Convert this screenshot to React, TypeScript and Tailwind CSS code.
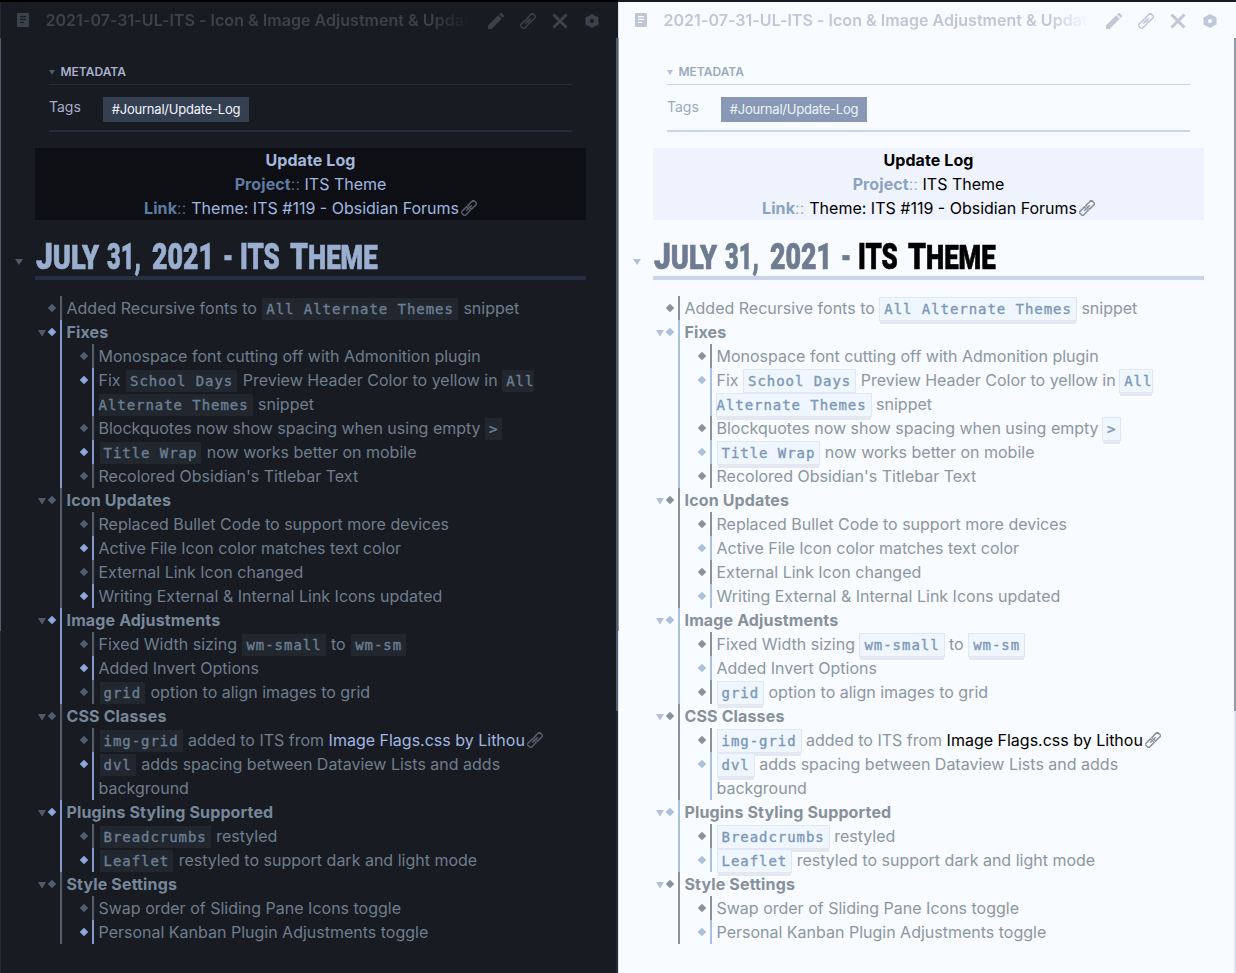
import React, { createContext, useContext } from "react";

type Theme = {
  dark: boolean;
  bg: string; title: string; meta: string; tri: string; rule: string; tag: string;
  card: string; cardTitle: string; key: string; value: string; linkIcon: string;
  h1a: string; h1b: string; h1rule: string;
  text: string; strong: string; code: string; link: string;
  edge: string; track: string;
};

const dark: Theme = {
  dark: true,
  bg: "bg-[#181b22]",
  title: "text-[#3a434b]",
  meta: "text-[#a7b0cb]",
  tri: "text-[#4f5b6b]",
  rule: "border-[#232c3f]",
  tag: "bg-[#353f52] text-[#f1f4fa]",
  card: "bg-[#0e0f14]",
  cardTitle: "text-[#a3b8dc]",
  key: "text-[#5d7ba3]",
  value: "text-[#a0b7e0]",
  linkIcon: "text-[#565e6c]",
  h1a: "text-[#9aaed0]",
  h1b: "text-[#9aaed0]",
  h1rule: "border-[#252f40]",
  text: "text-[#6f7d8c]",
  strong: "text-[#778799]",
  code: "bg-[#22272f] text-[#6c7f92]",
  link: "text-[#a0b7e0]",
  edge: "bg-[#4f5d6f]",
  track: "bg-[#232a37]",
};

const light: Theme = {
  dark: false,
  bg: "bg-[#f8fbff]",
  title: "text-[#c0c8d8]",
  meta: "text-[#9aabbd]",
  tri: "text-[#b3c0da]",
  rule: "border-[#cbd4ea]",
  tag: "bg-[#8998b5] text-[#eef3fc]",
  card: "bg-[#eff3fe]",
  cardTitle: "text-black",
  key: "text-[#8ba3c0]",
  value: "text-black",
  linkIcon: "text-[#8b9097]",
  h1a: "text-[#6f7b90]",
  h1b: "text-black",
  h1rule: "border-[#cbd4ea]",
  text: "text-[#8d97a1]",
  strong: "text-[#87919c]",
  code: "bg-[#eff6ff] text-[#7b98b8] shadow-[0_0_0_1px_#e0e8f8,0_4px_0_0_#e5e9ef]",
  link: "text-black",
  edge: "bg-[#929ba5]",
  track: "bg-[#dfe5f6]",
};

const ThemeContext = createContext<Theme>(dark);
const useTheme = () => useContext(ThemeContext);

function LinkIcon({ size }: { size: number }) {
  return (
    <svg width={size} height={size} viewBox="0 0 16 16" fill="none" stroke="currentColor" strokeWidth="1.5" className="shrink-0">
      <g transform="rotate(-45 8 8)">
        <path d="M7 7V5.400H-.700v5.200H7V9M9 7V5.400h7.700v5.200H9V9M4 8h8" />
      </g>
    </svg>
  );
}

function Header() {
  const t = useTheme();
  return (
    <header className={`flex h-9 items-center ${t.title}`}>
      <svg width="12" height="14" viewBox="0 0 12 14" className="ml-[17px] shrink-0">
        <path fill="currentColor" fillRule="evenodd" d="M1 0h10a1 1 0 0 1 1 1v12a1 1 0 0 1-1 1H1a1 1 0 0 1-1-1V1a1 1 0 0 1 1-1Zm2 3v1.3h6V3Zm0 2.800v1.3h6V5.800Zm0 2.900V10h4V8.700Z" />
      </svg>
      <div className="ml-[16.5px] w-[424px] overflow-hidden whitespace-nowrap text-[16px] font-semibold tracking-[0.04px] [mask-image:linear-gradient(to_right,black_385px,transparent)]">
        2021-07-31-UL-ITS - Icon &amp; Image Adjustment &amp; Updates
      </div>
      <div className="mt-px ml-[18.5px] flex items-center gap-4">
        <svg width="16" height="16" viewBox="0 0 16 16" fill="currentColor">
          <path d="M0 16v-3.500L10.200 2.300l3.500 3.500L3.500 16ZM11.200 1.400l1.100-1.100a1 1 0 0 1 1.400 0l2 2a1 1 0 0 1 0 1.400l-1.100 1.100Z" />
        </svg>
        <LinkIcon size={16} />
        <svg width="16" height="16" viewBox="0 0 16 16" stroke="currentColor" strokeWidth="3"><path d="M1.500 1.500l13 13M14.500 1.500l-13 13" /></svg>
        <svg width="16" height="16" viewBox="0 0 16 16" fill="currentColor"><path fillRule="evenodd" d="M8 1l6.500 3.500v7L8 15l-6.500-3.500v-7ZM8 5.900a2.100 2.100 0 1 0 0 4.200a2.100 2.100 0 0 0 0-4.200Z" /></svg>
      </div>
    </header>
  );
}

function Triangle({ className }: { className: string }) {
  return <svg viewBox="0 0 8 7" preserveAspectRatio="none" className={className} fill="currentColor"><path d="M0 0h8L4 7Z" /></svg>;
}

function Code({ children, className = "" }: { children: React.ReactNode; className?: string }) {
  const t = useTheme();
  return (
    <code className={`px-1 py-[3px] font-['DejaVu_Sans_Mono',monospace] text-[14px] leading-[0] font-normal tracking-[0.95px] [-webkit-text-stroke:0.35px_currentColor] ${t.code} ${className}`}>{children}</code>
  );
}

function lineColor(t: Theme, accent: boolean) {
  if (t.dark) return accent ? "border-[#8199cb]" : "border-[#4f5d6d]";
  return accent ? "border-[#a9c2da]" : "border-[#8b949e]";
}

function Dot({ accent }: { accent: boolean }) {
  const t = useTheme();
  const color = t.dark ? (accent ? "bg-[#8fa8dc]" : "bg-[#505d6b]") : accent ? "bg-[#a9c2da]" : "bg-[#87909b]";
  return <i className={`-ml-[0.5px] mt-[9.3px] mr-[5px] size-[6px] shrink-0 rotate-45 ${color}`} />;
}

function Item({ accent, children }: { accent: boolean; children: React.ReactNode }) {
  const t = useTheme();
  return (
    <li className="flex">
      <Dot accent={accent} />
      <div className={`w-[460px] border-l-2 pl-[4.5px] leading-6 ${lineColor(t, accent)}`}>{children}</div>
    </li>
  );
}

function Group({ title, accent, children }: { title: string; accent: boolean; children: React.ReactNode }) {
  const t = useTheme();
  return (
    <li className="-ml-[11.5px] flex">
      <Triangle className={`mt-[9.5px] mr-[3.5px] h-[6.5px] w-2 shrink-0 ${t.tri}`} />
      <Dot accent={accent} />
      <div className={`border-l-2 pl-[4.5px] leading-6 ${lineColor(t, accent)}`}>
        <strong className={`block font-bold tracking-[0.14px] ${t.strong}`}>{title}</strong>
        <ul className="pl-[15px]">{children}</ul>
      </div>
    </li>
  );
}

function Log() {
  const t = useTheme();
  return (
    <ul className={`mt-[16px] ml-[49.5px] text-[16px] font-normal whitespace-nowrap ${t.text}`}>
      <Item accent={false}>Added Recursive fonts to <Code className="mx-px">All Alternate Themes</Code> snippet</Item>
      <Group title="Fixes" accent>
        <Item accent={false}>Monospace font cutting off with Admonition plugin</Item>
        <Item accent>
          Fix <Code className="mx-px">School Days</Code> Preview Header Color to yellow in <Code className="pr-0">All</Code>
          <br />
          <Code className="mr-px pl-0">Alternate Themes</Code> snippet
        </Item>
        <Item accent={false}>Blockquotes now show spacing when using empty <Code>&gt;</Code></Item>
        <Item accent><Code className="mx-px">Title Wrap</Code> now works better on mobile</Item>
        <Item accent={false}>Recolored Obsidian's Titlebar Text</Item>
      </Group>
      <Group title="Icon Updates" accent={false}>
        <Item accent={false}>Replaced Bullet Code to support more devices</Item>
        <Item accent>Active File Icon color matches text color</Item>
        <Item accent={false}>External Link Icon changed</Item>
        <Item accent>Writing External &amp; Internal Link Icons updated</Item>
      </Group>
      <Group title="Image Adjustments" accent>
        <Item accent={false}>Fixed Width sizing <Code className="mx-px">wm-small</Code> to <Code className="mx-px">wm-sm</Code></Item>
        <Item accent>Added Invert Options</Item>
        <Item accent={false}><Code className="mx-px">grid</Code> option to align images to grid</Item>
      </Group>
      <Group title="CSS Classes" accent={false}>
        <Item accent={false}>
          <Code className="mx-px">img-grid</Code> added to ITS from <a className={t.link}>Image Flags.css by Lithou</a>
          <span className={`ml-[2px] inline-block align-[-2px] leading-none ${t.linkIcon}`}><LinkIcon size={16} /></span>
        </Item>
        <Item accent><Code className="mx-px">dvl</Code> adds spacing between Dataview Lists and adds<br />background</Item>
      </Group>
      <Group title="Plugins Styling Supported" accent>
        <Item accent={false}><Code className="mx-px">Breadcrumbs</Code> restyled</Item>
        <Item accent><Code className="mx-px">Leaflet</Code> restyled to support dark and light mode</Item>
      </Group>
      <Group title="Style Settings" accent={false}>
        <Item accent={false}>Swap order of Sliding Pane Icons toggle</Item>
        <Item accent>Personal Kanban Plugin Adjustments toggle</Item>
      </Group>
    </ul>
  );
}

function Word({ cell, scale, children }: { cell: string; scale: string; children: React.ReactNode }) {
  return (
    <span className={`shrink-0 ${cell}`}>
      <span className={`inline-block origin-left ${scale}`}>{children}</span>
    </span>
  );
}

function Heading() {
  const t = useTheme();
  return (
    <h1 className={`ml-[12px] flex h-[60px] w-[551px] border-b-4 pl-[0.5px] font-[Roboto,sans-serif] text-[37.5px] leading-[72px] font-black whitespace-nowrap uppercase [-webkit-text-stroke:0.7px_currentColor] ${t.h1rule} ${t.h1a}`}>
      <Word cell="w-[71px]" scale="scale-x-[0.8]">J<small className="text-[34px]">uly</small></Word>
      <Word cell="w-[45px]" scale="scale-x-[0.63]">31,</Word>
      <Word cell="w-[71px]" scale="scale-x-[0.715]">2021</Word>
      <Word cell="w-[17px]" scale="scale-x-[0.6]">-</Word>
      <span className={`flex ${t.h1b}`}>
        <Word cell="w-[50px]" scale="scale-x-[0.69]">ITS</Word>
        <Word cell="w-[90px]" scale="scale-x-[0.76]">T<small className="text-[34px]">heme</small></Word>
      </span>
    </h1>
  );
}

function Pane({ theme }: { theme: Theme }) {
  const t = theme;
  return (
    <ThemeContext.Provider value={theme}>
      <section className={`relative h-[973px] w-[618px] overflow-hidden border-t-2 ${t.dark ? "border-black" : "border-[#181b22]"} ${t.bg}`}>
        <div className={`absolute top-0 bottom-0 left-0 w-px ${t.track}`}>
          <div className={`mt-9 h-[593px] ${t.edge}`} />
        </div>
        <div className={`absolute top-9 right-0 bottom-0 w-[2px] ${t.track}`}>
          <div className={`h-[673px] ${t.edge}`} />
        </div>
        <Header />
        <div className="mt-[25px] ml-[49px] w-[523px]">
          <div className={`flex h-[22px] items-start border-b text-[12px] leading-[17px] font-semibold ${t.meta} ${t.rule}`}>
            <Triangle className={`mt-[7px] mr-[5.5px] h-[5px] w-[6px] ${t.tri}`} />METADATA
          </div>
          <div className={`flex h-[47px] border-b-2 ${t.rule}`}>
            <span className={`w-[54px] pt-[12px] text-[14px] leading-5 ${t.meta}`}>Tags</span>
            <span className={`mt-[12px] h-[25px] w-[146px] text-center text-[13px] leading-[25px] tracking-[-0.22px] ${t.tag}`}>#Journal/Update-Log</span>
          </div>
        </div>
        <div className={`mt-4 ml-[35px] h-[72px] w-[551px] text-center text-[16px] leading-6 font-normal ${t.card} ${t.value}`}>
          <div className={`font-bold tracking-[0.09px] ${t.cardTitle}`}>Update Log</div>
          <div><span className={`tracking-[0.1px] ${t.key}`}><b className="font-bold">Project</b><span className="font-light">::</span></span> ITS Theme</div>
          <div className="flex justify-center"><span className={`mr-[5px] tracking-[0.1px] ${t.key}`}><b className="font-bold">Link</b><span className="font-light">::</span></span> Theme: ITS #119 - Obsidian Forums<span className={`mt-[4px] ml-[2px] ${t.linkIcon}`}><LinkIcon size={16} /></span></div>
        </div>
        <div className="flex">
          <Triangle className={`mt-[39px] ml-[15px] h-[6px] w-2 ${t.tri}`} />
          <Heading />
        </div>
        <Log />
      </section>
    </ThemeContext.Provider>
  );
}

export default function App() {
  return (
    <main className="flex w-[1236px] font-[Inter,sans-serif]">
      <Pane theme={dark} />
      <Pane theme={light} />
    </main>
  );
}
